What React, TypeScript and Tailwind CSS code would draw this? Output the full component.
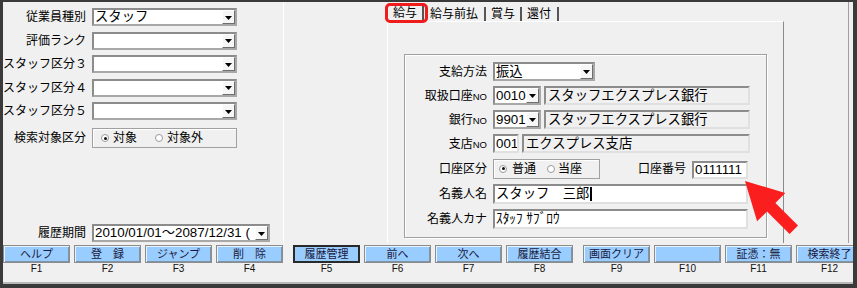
import React from "react";

const Tri = () => (
  <svg width="7" height="4" viewBox="0 0 7 4" className="block">
    <path d="M0 0H7L3.5 4Z" fill="#000" />
  </svg>
);

function DropBtn() {
  return (
    <div className="w-[13px] shrink-0 h-full bg-[#f6f6f6] border border-t-white border-l-white border-r-[#6e6e6e] border-b-[#6e6e6e] flex items-center justify-center pt-[1px]">
      <Tri />
    </div>
  );
}

function Select({
  className,
  children,
  textClass,
}: {
  className: string;
  children?: React.ReactNode;
  textClass?: string;
}) {
  return (
    <div
      className={`flex h-full bg-white border-2 border-[#a8a8a8] border-t-[#8c8c8c] border-l-[#8c8c8c] ${className}`}
    >
      <div
        className={`flex-1 min-w-0 overflow-hidden whitespace-nowrap flex items-center pl-[1px] leading-none ${
          textClass ?? "text-[13.33px]"
        }`}
      >
        {children}
      </div>
      <DropBtn />
    </div>
  );
}

const RO =
  "h-full border-2 border-t-[#8c8c8c] border-l-[#8c8c8c] border-r-[#e0e0e0] border-b-[#e0e0e0] bg-[#f0f0f0] flex items-center pl-[2px] text-[13.33px] leading-none whitespace-nowrap overflow-hidden";
const WI =
  "h-full border-2 border-t-[#8c8c8c] border-l-[#8c8c8c] border-r-[#e0e0e0] border-b-[#e0e0e0] bg-white flex items-center pl-[1px] text-[13.33px] leading-none whitespace-nowrap overflow-hidden";

function Radio({ checked }: { checked?: boolean }) {
  return (
    <span className="w-[8px] h-[8px] rounded-full border border-[#9a9a9a] bg-white flex items-center justify-center shrink-0">
      {checked && <span className="w-[3px] h-[3px] rounded-full bg-[#111]" />}
    </span>
  );
}

const NO = () => <span className="text-[9.5px]">NO</span>;

const leftRows: [string, string][] = [
  ["従業員種別", "スタッフ"],
  ["評価ランク", ""],
  ["スタッフ区分３", ""],
  ["スタッフ区分４", ""],
  ["スタッフ区分５", ""],
];

const groups: [string, string, boolean?][][] = [
  [
    ["ヘルプ", "F1"],
    ["登　録", "F2"],
    ["ジャンプ", "F3"],
    ["削　除", "F4"],
  ],
  [
    ["履歴管理", "F5", true],
    ["前へ", "F6"],
    ["次へ", "F7"],
    ["履歴結合", "F8"],
  ],
  [
    ["画面クリア", "F9"],
    ["", "F10"],
    ["証憑：無", "F11"],
    ["検索終了", "F12"],
  ],
];

export default function App() {
  return (
    <div className="relative w-[857px] h-[288px] overflow-hidden bg-[#f0f0f0] border-t-2 border-l-[3px] border-r-[4px] border-b-[4px] border-[#3a3a3a] flex flex-col text-black font-['Liberation_Sans','Noto_Sans_CJK_JP',sans-serif]">
      {/* top area */}
      <div className="flex h-[241px] mr-[4px] shrink-0">
        {/* left panel */}
        <div className="w-[281px] shrink-0 border-r border-white flex flex-col pt-[6px] pb-[1px] overflow-hidden">
          <div className="flex flex-col gap-[5.5px]">
            {leftRows.map(([l, v]) => (
              <div key={l} className="flex items-center h-[18px]">
                <div className="w-[83px] shrink-0 text-right whitespace-nowrap text-[12px] leading-none">
                  {l}
                </div>
                <Select className="ml-[6px] w-[145px]">{v}</Select>
              </div>
            ))}
          </div>
          <div className="flex items-center h-[20px] mt-[8px]">
            <div className="w-[83px] shrink-0 text-right whitespace-nowrap text-[12px] leading-none">
              検索対象区分
            </div>
            <div className="ml-[6px] w-[145px] h-full border border-[#a0a0a0] shadow-[inset_1px_1px_0_#fff] flex items-center pl-[8px] text-[12px] leading-none">
              <Radio checked />
              <span className="ml-[4px]">対象</span>
              <span className="ml-[18px]">
                <Radio />
              </span>
              <span className="ml-[4px]">対象外</span>
            </div>
          </div>
          <div className="flex items-center h-[18px] mt-auto">
            <div className="w-[83px] shrink-0 text-right whitespace-nowrap text-[12px] leading-none">
              履歴期間
            </div>
            <Select className="ml-[6px] w-[178px]">
              2010/01/01～2087/12/31 (
            </Select>
          </div>
        </div>

        {/* center */}
        <div className="flex-1 border-r border-[#a0a0a0] pl-[103px] flex flex-col">
          <div className="w-[397px] h-full flex flex-col">
            {/* tabs */}
            <div className="h-[19px] flex items-end pl-[1px] text-[12px] leading-none shrink-0">
              <div className="h-[17px] pl-[5px] pr-[5px] flex items-center border-r-2 border-[#555]">給与</div>
              <div className="h-[14px] pl-[6px] pr-[6px] flex items-center border-r-2 border-[#555]">給与前払</div>
              <div className="h-[14px] pl-[5px] pr-[5px] flex items-center border-r-2 border-[#555]">賞与</div>
              <div className="h-[14px] pl-[5px] pr-[6px] flex items-center border-r-2 border-[#555]">還付</div>
            </div>
            {/* panel body */}
            <div className="flex-1 border-t border-l border-white border-r border-r-[#8a8a8a] pt-[32px] pl-[16px]">
              <div className="w-[363px] h-[184px] border border-[#a0a0a0] shadow-[inset_1px_1px_0_#fff,1px_1px_0_#fff] pt-[7px] flex flex-col gap-[5px]">
                <div className="flex items-center h-[19px]">
                  <div className="w-[82px] shrink-0 text-right whitespace-nowrap text-[12px] leading-none">支給方法</div>
                  <Select className="ml-[6px] w-[102px]">振込</Select>
                </div>
                <div className="flex items-center h-[19px]">
                  <div className="w-[82px] shrink-0 text-right whitespace-nowrap text-[12px] leading-none">
                    取扱口座<NO />
                  </div>
                  <Select className="ml-[6px] w-[48px]">0010</Select>
                  <div className={`ml-[3px] w-[206px] ${RO}`}>スタッフエクスプレス銀行</div>
                </div>
                <div className="flex items-center h-[19px]">
                  <div className="w-[82px] shrink-0 text-right whitespace-nowrap text-[12px] leading-none">
                    銀行<NO />
                  </div>
                  <Select className="ml-[6px] w-[48px]">9901</Select>
                  <div className={`ml-[3px] w-[206px] ${RO}`}>スタッフエクスプレス銀行</div>
                </div>
                <div className="flex items-center h-[19px]">
                  <div className="w-[82px] shrink-0 text-right whitespace-nowrap text-[12px] leading-none">
                    支店<NO />
                  </div>
                  <div className={`ml-[6px] w-[26px] ${WI}`}>001</div>
                  <div className={`ml-[3px] w-[228px] ${RO}`}>エクスプレス支店</div>
                </div>
                <div className="flex items-center h-[21px]">
                  <div className="w-[82px] shrink-0 text-right whitespace-nowrap text-[12px] leading-none">口座区分</div>
                  <div className="ml-[6px] w-[107px] h-[20px] border border-[#a0a0a0] shadow-[inset_1px_1px_0_#fff] flex items-center pl-[5px] text-[12px] leading-none">
                    <Radio checked />
                    <span className="ml-[5px]">普通</span>
                    <span className="ml-[11px]">
                      <Radio />
                    </span>
                    <span className="ml-[3px]">当座</span>
                  </div>
                  <div className="w-[86px] shrink-0 text-right whitespace-nowrap text-[12px] leading-none">口座番号</div>
                  <div className={`ml-[6px] w-[56px] !h-[18px] mt-[2px] ${WI}`}>0111111</div>
                </div>
                <div className="flex items-center h-[20px]">
                  <div className="w-[82px] shrink-0 text-right whitespace-nowrap text-[12px] leading-none">名義人名</div>
                  <div className={`ml-[6px] w-[255px] ${WI}`}>
                    スタッフ　三郎
                    <span className="inline-block w-[2px] h-[14px] bg-black ml-[1px]" />
                  </div>
                </div>
                <div className="flex items-center h-[20px]">
                  <div className="w-[82px] shrink-0 text-right whitespace-nowrap text-[12px] leading-none">名義人カナ</div>
                  <div className={`ml-[6px] w-[255px] ${WI}`}>ｽﾀｯﾌ ｻﾌﾞﾛｳ</div>
                </div>
              </div>
            </div>
          </div>
        </div>
      </div>

      {/* function keys */}
      <div className="flex mt-[2px] shrink-0">
        {groups.map((g, gi) => (
          <div
            key={gi}
            className={`grid grid-cols-[repeat(4,67px)] gap-x-[4px] ${gi > 0 ? "ml-[10px]" : ""}`}
          >
            {g.map(([label, f, active]) => (
              <div key={f} className="flex flex-col">
                <div
                  className={`h-[18px] bg-[#99ccff] flex items-center justify-center text-[11px] leading-none text-[#1a1a40] whitespace-nowrap ${
                    active
                      ? "border-2 border-[#2a2a2a]"
                      : "border border-[#8c8c8c] shadow-[inset_1px_1px_0_#e6f2ff,inset_-1px_-1px_0_#7d93a8]"
                  }`}
                >
                  {label}
                </div>
                <div className="h-[12px] flex items-center justify-center text-[10px] leading-none text-[#111]">
                  {f}
                </div>
              </div>
            ))}
          </div>
        ))}
      </div>
      <div className="flex-1 flex items-end">
        <div className="w-full h-[2px] bg-[#b8b8b8]" />
      </div>

      {/* red highlight on tab */}
      <div className="absolute left-[382px] top-[1px] w-[43px] h-[20px] border-[3px] border-[#f01c1c] rounded-[5px]" />

      {/* red arrow */}
      <svg
        className="absolute left-[737px] top-[174px]"
        width="65"
        height="65"
        viewBox="0 0 65 65"
      >
        <polygon
          points="5,5 45.3,17.1 35.4,27 58,49.6 49.6,58 27,35.4 17.1,45.3"
          fill="#fa1e1e"
        />
      </svg>
    </div>
  );
}
